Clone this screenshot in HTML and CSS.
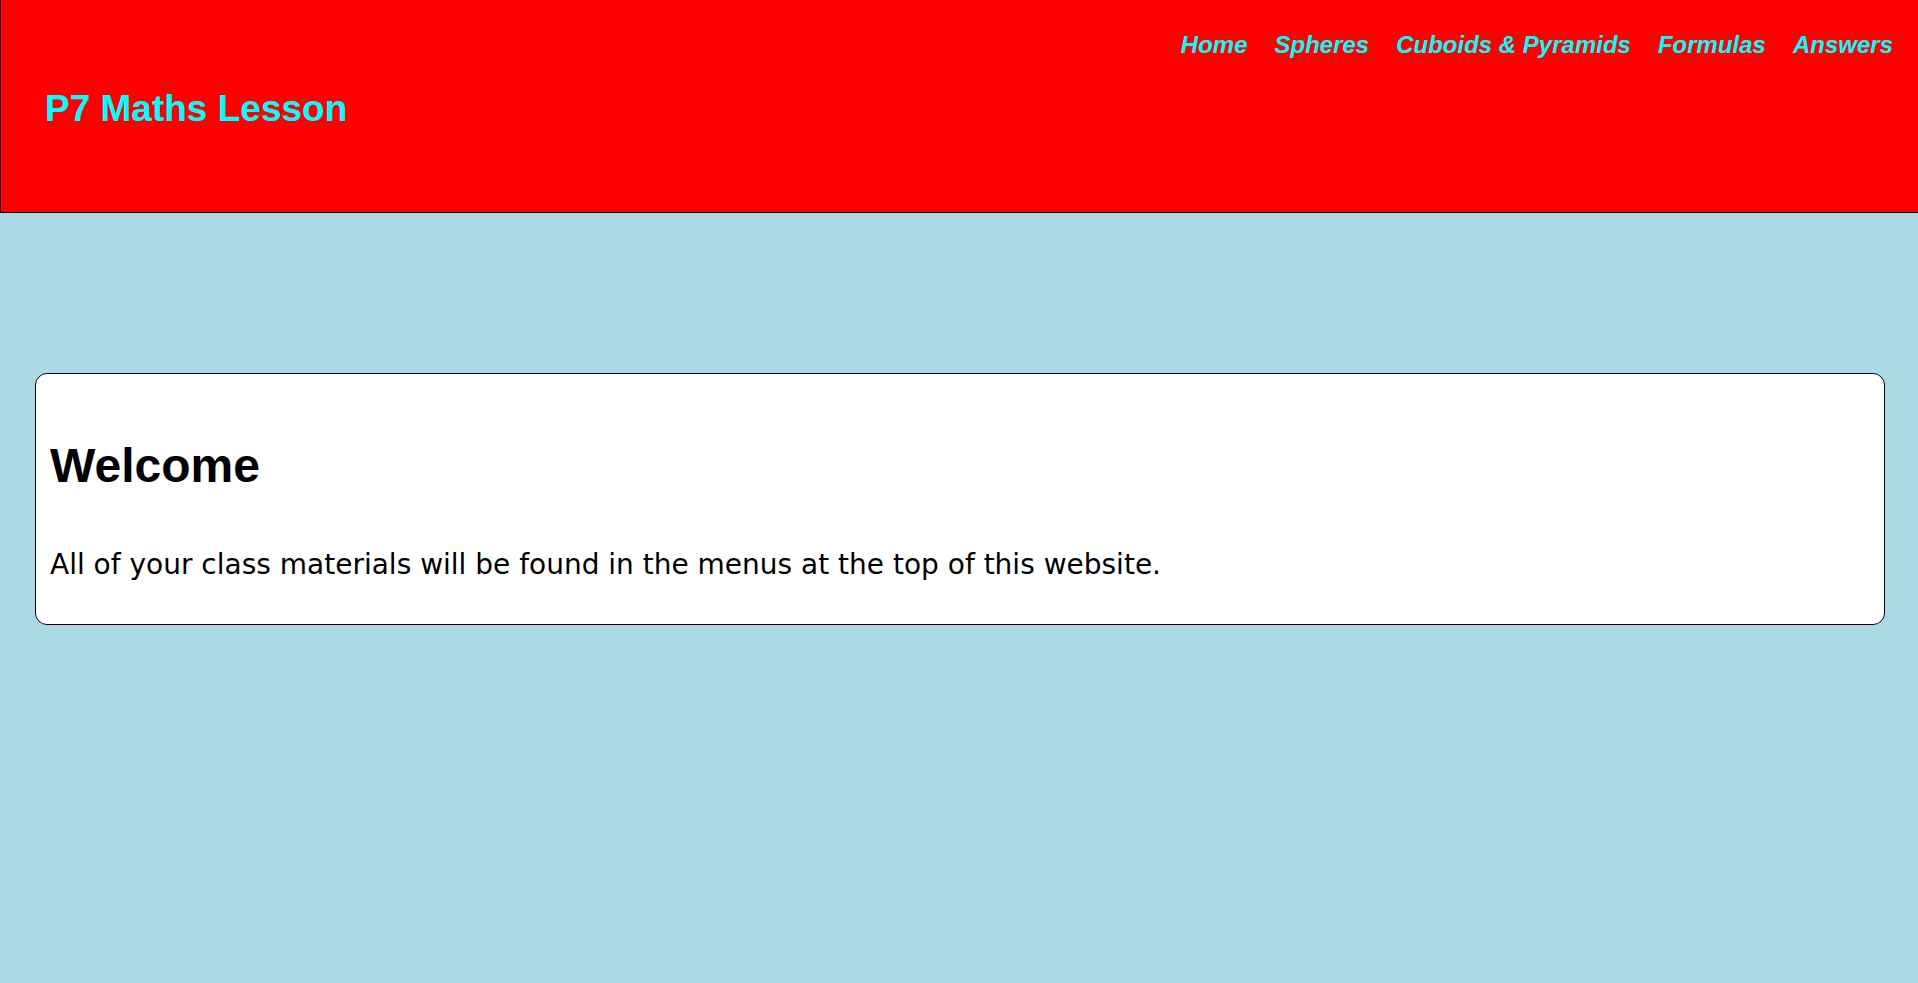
FILE: index.html
```html
<!DOCTYPE html>
<html lang="en">
<head>
<meta charset="utf-8">
<title>P7 Maths Lesson</title>
<link rel="stylesheet" href="styles.css">
</head>
<body>
<header class="site-header">
  <nav class="nav">
    <a class="nav-link" href="#">Home</a>
    <a class="nav-link" href="#">Spheres</a>
    <a class="nav-link" href="#">Cuboids &amp; Pyramids</a>
    <a class="nav-link" href="#">Formulas</a>
    <a class="nav-link" href="#">Answers</a>
  </nav>
  <div class="site-title">P7 Maths Lesson</div>
</header>
<main class="content">
  <section class="card">
    <h1 class="card-title">Welcome</h1>
    <p class="card-text">All of your class materials will be found in the menus at the top of this website.</p>
  </section>
</main>
</body>
</html>
```

FILE: styles.css
```css
html, body {
  margin: 0;
  padding: 0;
}
body {
  background: #add8e6;
  font-family: "Comic Sans MS", "Liberation Sans", Arial, sans-serif;
  color: #000;
  min-height: 983px;
}
.site-header {
  background: #ff0000;
  height: 212px;
  border-left: 1px solid #000;
  border-bottom: 1px solid #000;
  display: flex;
  flex-direction: column;
}
.nav {
  display: flex;
  justify-content: flex-end;
  gap: 27px;
  padding: 30px 25px 0 0;
}
.nav-link {
  color: #00ffff;
  font-weight: bold;
  font-style: italic;
  font-size: 24px;
  line-height: 30px;
  text-decoration: none;
}
.site-title {
  color: #00ffff;
  font-weight: bold;
  font-size: 37px;
  line-height: 44px;
  margin-top: 27px;
  padding-left: 44px;
}
.content {
  padding: 160px 33px 0 35px;
}
.card {
  background: #fff;
  border: 1px solid #000;
  border-radius: 12px;
  padding: 64px 14px 43px;
}
.card-title {
  margin: 0 0 55px;
  font-size: 48px;
  line-height: 56px;
  font-weight: bold;
}
.card-text {
  margin: 0;
  font-family: "Comic Sans MS", "DejaVu Sans", sans-serif;
  font-size: 28px;
  line-height: 32px;
}
```
